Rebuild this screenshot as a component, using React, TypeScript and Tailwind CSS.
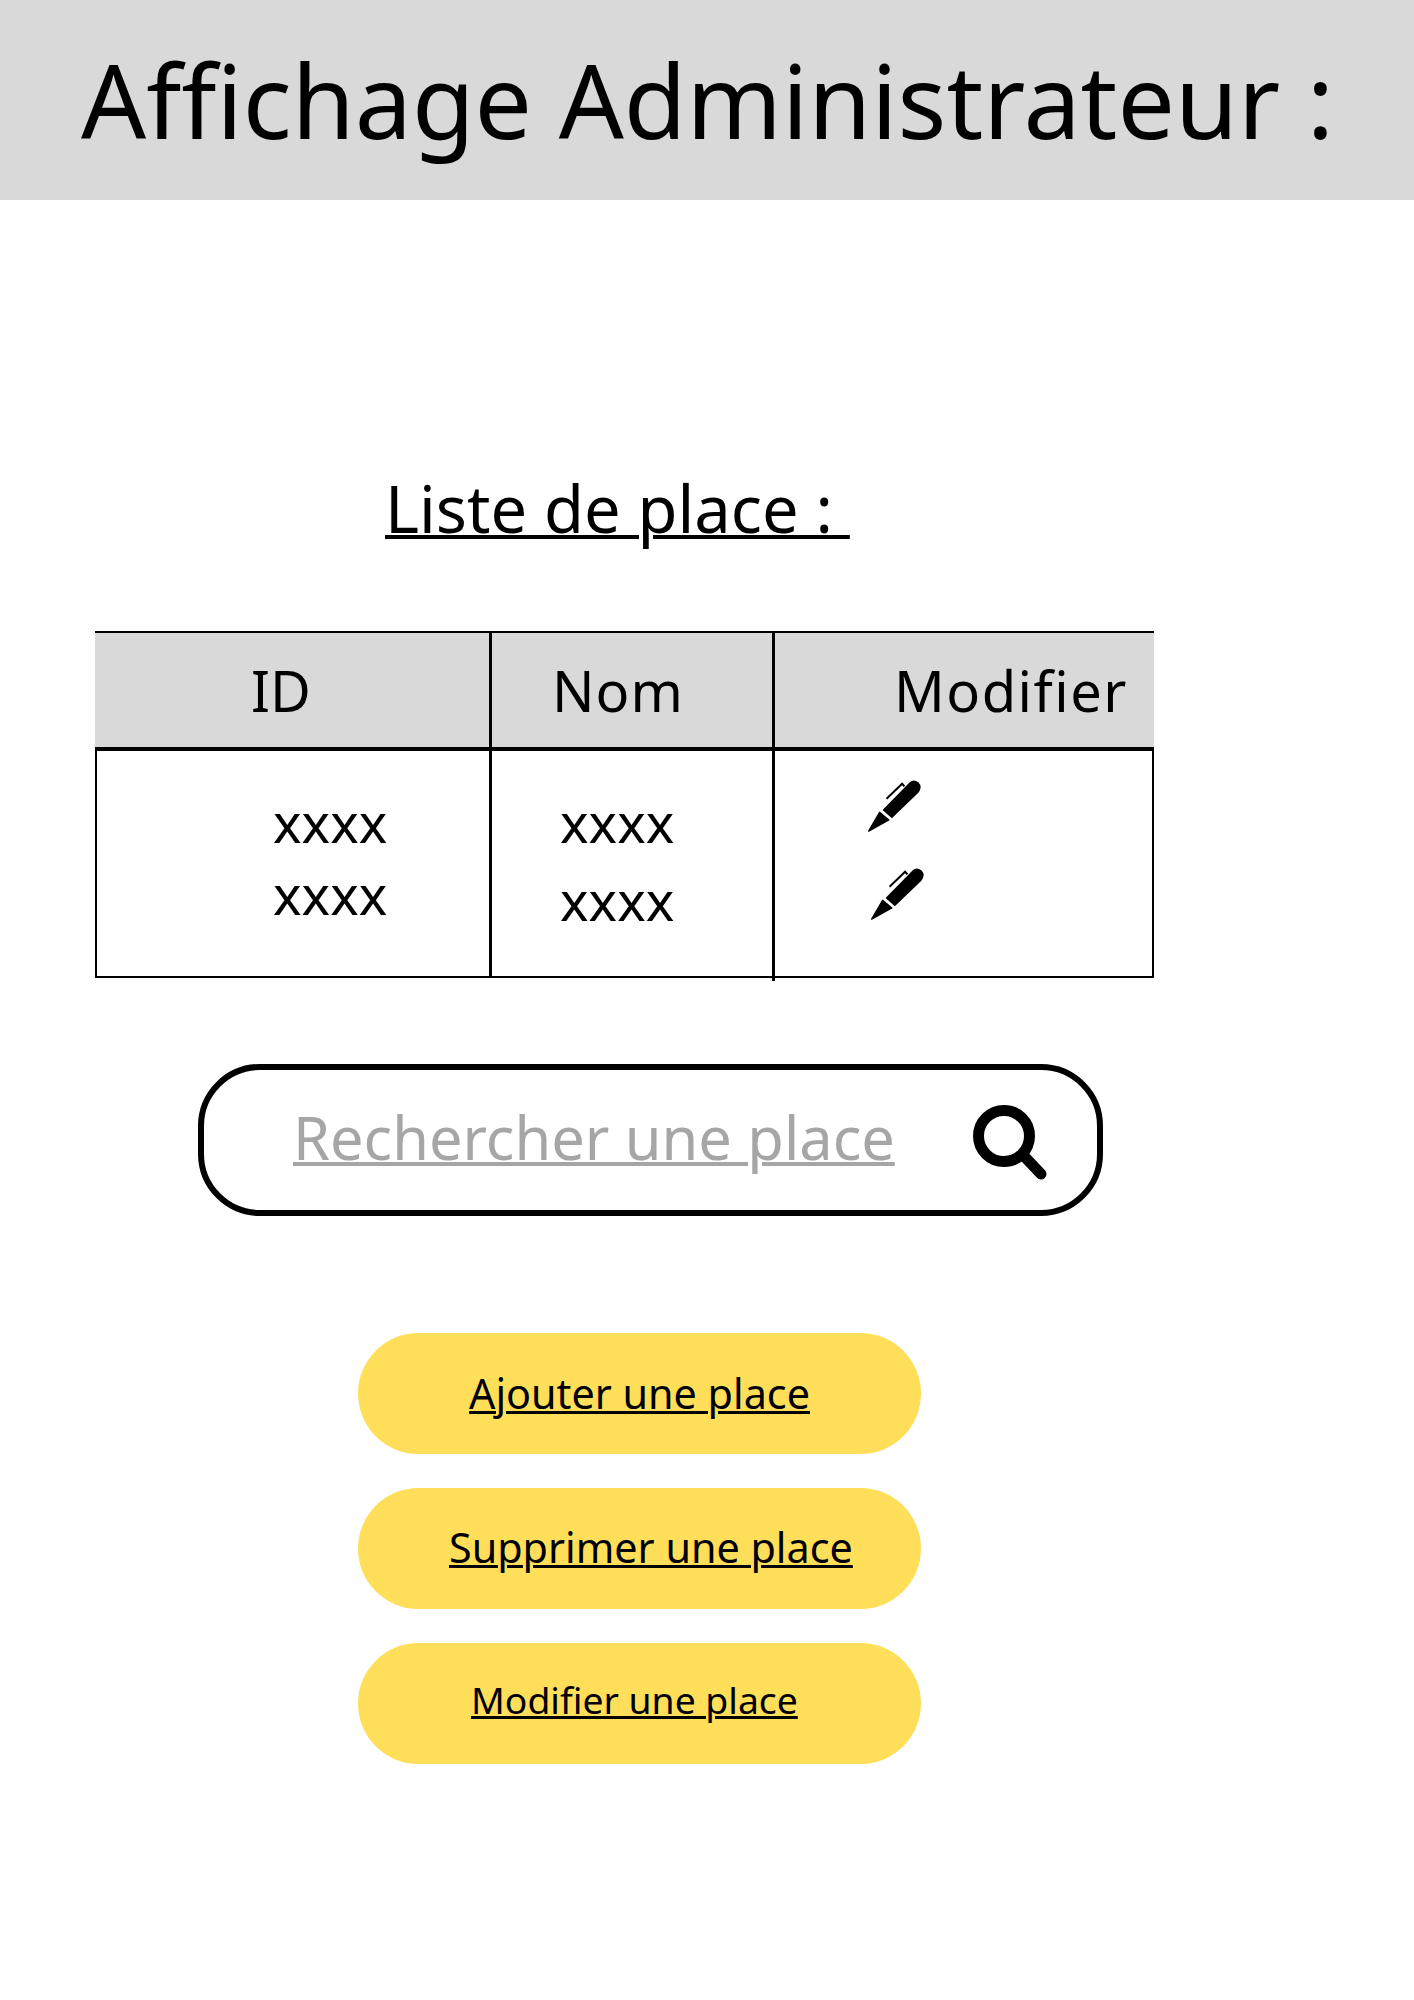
const Pen = () => (
  <svg viewBox="0 0 160 156" className="h-[52px] w-[53px]" fill="black">
    <path d="M2 154 L35 97 L63 120 Z" stroke="black" strokeWidth="4" strokeLinejoin="round" />
    <path d="M44 90 L72 115 L152 38 Q166 20 152 6 Q138 -4 126 6 Z" />
    <path d="M56 56 L103 11 L110 19" fill="none" stroke="black" strokeWidth="6" />
  </svg>
);

const SearchIcon = () => (
  <svg viewBox="0 0 75 75" className="mt-[5px] h-[75px] w-[75px]" fill="none" stroke="black">
    <circle cx="31" cy="31" r="25.5" strokeWidth="11" />
    <line x1="50" y1="50" x2="68" y2="69" strokeWidth="11" strokeLinecap="round" />
  </svg>
);

const buttons = [
  { label: "Ajouter une place", text: "text-[41.3px]", pad: "pl-[111px]" },
  { label: "Supprimer une place", text: "text-[41.3px]", pad: "pl-[91px] pb-[2px]" },
  { label: "Modifier une place", text: "text-[37.3px]", pad: "pl-[113px] pb-[7px]" },
];

const App = () => {
  return (
    <div className="h-[2000px] w-[1414px] overflow-hidden bg-white font-['Noto_Sans',sans-serif] text-black">
      <div className="flex h-[200px] items-center bg-[#d9d9d9] pl-[81px]">
        <h1 className="whitespace-nowrap text-[102px] leading-none">
          Affichage Administrateur :
        </h1>
      </div>

      <h2 className="ml-[385px] mt-[268px] whitespace-pre text-[65px] leading-[80px] underline decoration-[4px]">
        {"Liste de place : "}
      </h2>

      <div className="relative ml-[95px] mt-[83px] w-[1059px]">
        <div className="grid h-[120px] grid-cols-[394px_283px_1fr] border-b-[4px] border-t-2 border-black bg-[#d9d9d9] text-[56px] leading-[70px]">
          <div className="pl-[156px] pt-[22px]">ID</div>
          <div className="border-l-[3px] border-black pl-[60px] pt-[22px] tracking-[1px]">Nom</div>
          <div className="border-l-[3px] border-black pl-[119px] pt-[22px] tracking-[1.5px]">Modifier</div>
        </div>
        <div className="grid h-[227px] grid-cols-[392px_283px_1fr] border-x-2 border-b-2 border-black text-[54px] leading-[60px]">
          <div className="flex flex-col gap-[12px] pl-[176px] pt-[41px]">
            <span>xxxx</span>
            <span>xxxx</span>
          </div>
          <div className="flex flex-col gap-[18px] border-l-[3px] border-black pl-[68px] pt-[41px]">
            <span>xxxx</span>
            <span>xxxx</span>
          </div>
          <div className="flex flex-col gap-[36px] border-l-[3px] border-black pl-[93px] pt-[29px]">
            <Pen />
            <div className="ml-[3px]">
              <Pen />
            </div>
          </div>
        </div>
        {/* the column line runs a little past the table */}
        <div className="absolute left-[677px] top-full h-[3px] w-[3px] bg-black" />
      </div>

      <div className="ml-[198px] mt-[86px] flex h-[152px] w-[905px] items-center justify-between rounded-[62px] border-[6px] border-black pl-[89px] pr-[49px]">
        <span className="mb-[7px] text-[59.5px] leading-[70px] text-[#a6a6a6] underline decoration-[4px]">
          Rechercher une place
        </span>
        <SearchIcon />
      </div>

      <div className="ml-[358px] mt-[117px] flex w-[563px] flex-col gap-[34px]">
        {buttons.map((b) => (
          <div
            key={b.label}
            className={`flex h-[121px] items-center rounded-full bg-[#ffde59] ${b.pad}`}
          >
            <span className={`${b.text} underline decoration-[3px]`}>{b.label}</span>
          </div>
        ))}
      </div>
    </div>
  );
};

export default App;
